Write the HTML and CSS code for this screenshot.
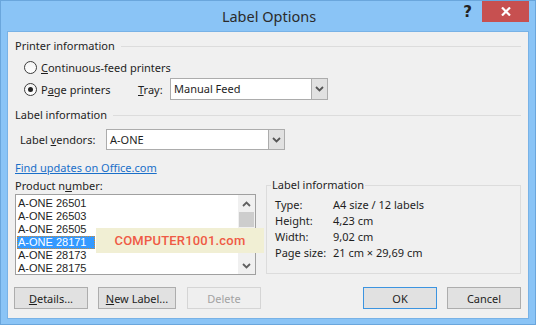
FILE: index.html
```html
<!DOCTYPE html>
<html>
<head>
<meta charset="utf-8">
<title>Label Options</title>
<link rel="stylesheet" href="styles.css">
</head>
<body>
<div class="window">
  <div class="titlebar">
    <div></div>
    <div class="title">Label Options</div>
    <div class="title-buttons">
      <span class="help">?</span>
      <span class="close"><svg width="10" height="9" viewBox="0 0 10 9"><path d="M1 0.5 L9 8.5 M9 0.5 L1 8.5" stroke="#fff" stroke-width="2.2"/></svg></span>
    </div>
  </div>
  <div class="client">
    <div class="section-head"><span>Printer information</span><i></i></div>
    <div class="row row-radio1">
      <span class="radio"></span><span><u>C</u>ontinuous-feed printers</span>
    </div>
    <div class="row row-radio2">
      <span class="radio-label"><span class="radio checked"></span><span>P<u>a</u>ge printers</span></span>
      <span class="tray-label"><u>T</u>ray:</span>
      <span class="combo combo-tray"><span class="combo-text">Manual Feed</span><span class="combo-btn"><svg width="9" height="6" viewBox="0 0 9 6"><path d="M1 1 L4.5 4.5 L8 1" fill="none" stroke="#555" stroke-width="1.8"/></svg></span></span>
    </div>
    <div class="section-head head2"><span>Label information</span><i></i></div>
    <div class="row row-vendor">
      <span class="vendor-label">Label <u>v</u>endors:</span>
      <span class="combo combo-vendor"><span class="combo-text">A-ONE</span><span class="combo-btn"><svg width="9" height="6" viewBox="0 0 9 6"><path d="M1 1 L4.5 4.5 L8 1" fill="none" stroke="#555" stroke-width="1.8"/></svg></span></span>
    </div>
    <div class="lower">
      <div class="left-col">
        <a class="link">Find updates on Office.com</a>
        <div class="prod-label">Product n<u>u</u>mber:</div>
        <div class="listbox">
          <ul class="items">
            <li>A-ONE 26501</li>
            <li>A-ONE 26503</li>
            <li>A-ONE 26505</li>
            <li class="sel"><span>A-ONE 28171</span></li>
            <li>A-ONE 28173</li>
            <li>A-ONE 28175</li>
          </ul>
          <div class="scrollbar">
            <span class="sb-arrow"><svg width="9" height="6" viewBox="0 0 9 6"><path d="M1 5 L4.5 1.5 L8 5" fill="none" stroke="#606060" stroke-width="1.8"/></svg></span>
            <span class="sb-track"><span class="sb-thumb"></span></span>
            <span class="sb-arrow"><svg width="9" height="6" viewBox="0 0 9 6"><path d="M1 1 L4.5 4.5 L8 1" fill="none" stroke="#606060" stroke-width="1.8"/></svg></span>
          </div>
          <div class="watermark">COMPUTER1001.com</div>
        </div>
      </div>
      <fieldset class="info">
        <legend>Label information</legend>
        <div class="info-grid">
          <span>Type:</span><span>A4 size / 12 labels</span>
          <span>Height:</span><span>4,23 cm</span>
          <span>Width:</span><span>9,02 cm</span>
          <span>Page size:</span><span>21 cm × 29,69 cm</span>
        </div>
      </fieldset>
    </div>
    <div class="buttons">
      <button class="btn btn-details"><u>D</u>etails...</button>
      <button class="btn btn-new"><u>N</u>ew Label...</button>
      <button class="btn btn-delete" disabled>Delete</button>
      <span class="spacer"></span>
      <button class="btn btn-ok">OK</button>
      <button class="btn btn-cancel">Cancel</button>
    </div>
  </div>
</div>
</body>
</html>
```

FILE: styles.css
```css
* { box-sizing: border-box; }
html, body { margin: 0; padding: 0; }
body {
  font-family: "Noto Sans", "Liberation Sans", sans-serif;
  font-size: 11px;
  color: #1e1e1e;
  background: #fff;
}
.window {
  width: 536px;
  height: 325px;
  background: #8ac4f6;
  border: 1px solid #6aa6dc;
  display: flex;
  flex-direction: column;
}
.titlebar {
  height: 30px;
  display: grid;
  grid-template-columns: 1fr auto 1fr;
  align-items: start;
}
.title {
  font-size: 14.5px;
  color: #2b2b2b;
  line-height: 30px;
  padding-left: 2px;
}
.title-buttons {
  display: flex;
  justify-content: flex-end;
  align-items: flex-start;
  padding-right: 6px;
}
.help {
  font-family: "DejaVu Sans", sans-serif;
  font-weight: bold;
  font-size: 15px;
  color: #222;
  line-height: 22px;
  margin-right: 10px;
}
.close {
  width: 47px;
  height: 21px;
  background: #c75050;
  display: flex;
  align-items: center;
  justify-content: center;
}
.client {
  margin: 0 6px;
  height: 288px;
  background: #f0f0f0;
  border: 1px solid #78b2e6;
  padding: 6px 7px 0 7px;
  display: flex;
  flex-direction: column;
}
.section-head {
  height: 16px;
  display: flex;
  align-items: center;
  line-height: 16px;
  white-space: nowrap;
}
.section-head i {
  flex: 1;
  height: 1px;
  background: #dcdcdc;
  margin-left: 6px;
}
.head2 { margin-top: 7px; }
.row {
  display: flex;
  align-items: center;
  white-space: nowrap;
}
.row-radio1 {
  height: 20px;
  margin-top: 3px;
  padding-left: 9px;
}
.row-radio2 {
  height: 22px;
  margin-top: 1px;
  padding-left: 9px;
}
.radio {
  width: 13px;
  height: 13px;
  border-radius: 50%;
  border: 1px solid #3c3c3c;
  background: linear-gradient(#f4f4f4, #ffffff);
  margin-right: 4px;
  display: inline-flex;
  align-items: center;
  justify-content: center;
  flex: none;
}
.radio.checked::after {
  content: "";
  width: 5px;
  height: 5px;
  border-radius: 50%;
  background: #222;
}
.radio-label {
  display: inline-flex;
  align-items: center;
  width: 114px;
}
.tray-label { width: 32px; }
.combo {
  display: inline-flex;
  height: 22px;
  border: 1px solid #acacac;
  background: #fff;
}
.combo-tray { width: 158px; }
.combo-text {
  flex: 1;
  padding-left: 3px;
  line-height: 20px;
}
.combo-btn {
  width: 16px;
  background: #e1e1e1;
  border-left: 1px solid #acacac;
  display: flex;
  align-items: center;
  justify-content: center;
}
.row-vendor {
  height: 21px;
  margin-top: 6px;
  padding-left: 5px;
}
.vendor-label { width: 86px; }
.combo-vendor { width: 179px; height: 21px; }
.combo-vendor .combo-text { line-height: 19px; }
.lower {
  display: flex;
  align-items: flex-end;
  margin-top: 10px;
}
.left-col {
  width: 241px;
  display: flex;
  flex-direction: column;
}
.link {
  color: #1a6fc9;
  text-decoration: underline;
  line-height: 16px;
}
.prod-label {
  line-height: 16px;
  margin-top: 2px;
}
.listbox {
  position: relative;
  height: 81px;
  border: 1px solid #a0a0a0;
  background: #fff;
  display: flex;
}
.items {
  list-style: none;
  margin: 0;
  padding: 2px 0 0 1px;
  flex: 1;
  font-family: "Liberation Sans", "Noto Sans", sans-serif;
  font-size: 11px;
}
.items li {
  line-height: 13px;
  height: 13px;
  padding-left: 1px;
  white-space: nowrap;
}
.items li.sel span {
  display: inline-block;
  background: #3399ff;
  color: #fff;
  outline: 1px dotted #c98a3a;
  outline-offset: -1px;
  width: 78px;
  margin-left: -1px;
  padding-left: 1px;
}
.scrollbar {
  width: 17px;
  display: flex;
  flex-direction: column;
  background: #f0f0f0;
}
.sb-arrow {
  height: 17px;
  display: flex;
  align-items: center;
  justify-content: center;
}
.sb-track {
  flex: 1;
  display: flex;
  flex-direction: column;
}
.sb-thumb {
  margin: 0 1px;
  height: 15px;
  background: #cdcdcd;
}
.watermark {
  position: absolute;
  left: 80px;
  top: 33px;
  width: 168px;
  height: 25px;
  background: #f1efd4;
  color: #ef5a45;
  font-family: "Roboto", "Open Sans", sans-serif;
  font-weight: 500;
  font-size: 13px;
  letter-spacing: 0.2px;
  display: flex;
  align-items: center;
  justify-content: center;
}
.info {
  margin: 0 0 1px 10px;
  padding: 0;
  width: 255px;
  border: 1px solid #dcdcdc;
  min-width: 0;
}
.info legend {
  margin-left: 4px;
  padding: 0 1px;
  line-height: 16px;
}
.info-grid {
  display: grid;
  grid-template-columns: 58px auto;
  grid-auto-rows: 16px;
  line-height: 16px;
  padding: 4px 0 12px 8px;
}
.buttons {
  display: flex;
  margin-top: 12px;
  margin-left: -1px;
}
.btn {
  height: 22px;
  width: 74px;
  border: 1px solid #adadad;
  background: #e1e1e1;
  font-family: inherit;
  font-size: 11px;
  color: #1e1e1e;
  padding: 0;
  margin: 0;
}
.btn-new { width: 78px; margin-left: 10px; }
.btn-delete {
  margin-left: 11px;
  color: #a3a3a3;
  background: #efefef;
  border-color: #d5d5d5;
}
.spacer { flex: 1; }
.btn-ok { border-color: #3c94e0; }
.btn-cancel { margin-left: 10px; }
```
